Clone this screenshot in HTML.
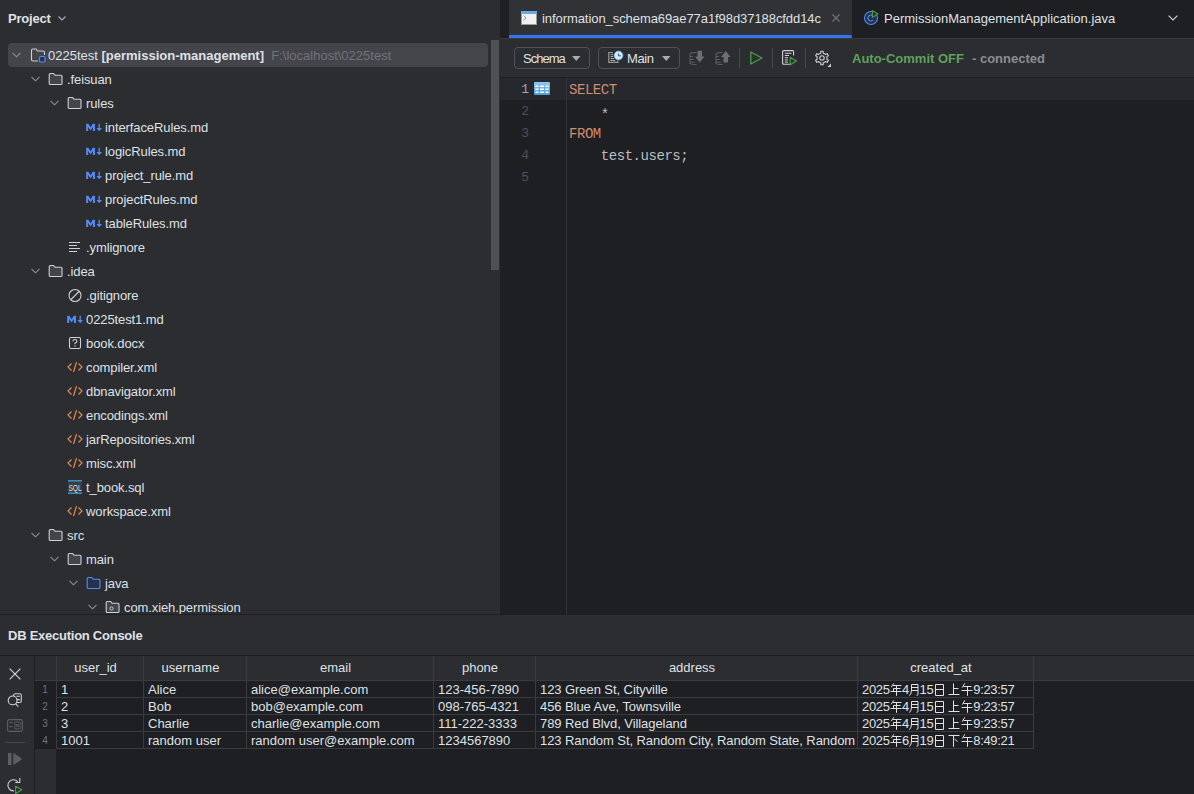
<!DOCTYPE html>
<html><head><meta charset="utf-8">
<style>
*{margin:0;padding:0;box-sizing:border-box}
html,body{width:1194px;height:794px;overflow:hidden;background:#2B2D30;font-family:"Liberation Sans",sans-serif;font-size:13px;color:#DFE1E5}
.a{position:absolute}
.t{position:absolute;white-space:pre;line-height:16px}
svg{position:absolute;overflow:visible}
#proj{left:0;top:0;width:500px;height:614px;background:#2B2D30;overflow:hidden}
#editor{left:500px;top:0;width:694px;height:614px;background:#1E1F22;overflow:hidden}
#console{left:0;top:614px;width:1194px;height:180px;background:#2B2D30}
.code{position:absolute;font-family:"Liberation Mono",monospace;font-size:14px;letter-spacing:-0.45px;line-height:22px;white-space:pre;color:#BCBEC4}
.kw{color:#CF8E6D}
.ln{position:absolute;font-family:"Liberation Mono",monospace;font-size:13px;line-height:22px;color:#4B5059;text-align:right;width:20px}
</style></head><body>

<!-- PROJECT PANEL -->
<div id="proj" class="a">
  <div class="t" style="left:8px;top:11px;font-weight:bold;letter-spacing:-0.2px">Project</div>
  <svg style="left:58px;top:16px" width="8" height="5"><path d="M0.5 0.5 L4 4 L7.5 0.5" stroke="#A8ADB3" stroke-width="1.2" fill="none"/></svg>
<div class="a" style="left:8px;top:43px;width:480px;height:24px;background:#43454A;border-radius:4px"></div>
<svg style="left:12px;top:52px" width="9" height="6"><path d="M0.5 0.8 L4.5 4.8 L8.5 0.8" stroke="#8C9096" stroke-width="1.1" fill="none"/></svg>
<svg style="left:30px;top:48px" width="16" height="15"><path d="M8 13 L3 13 Q1.5 13 1.5 11.5 L1.5 2.5 Q1.5 1 3 1 L6 1 L7.5 3 L13 3 Q14.5 3 14.5 4.5 L14.5 7" fill="none" stroke="#CED0D6" stroke-width="1.1"/><rect x="9.5" y="8.5" width="5.5" height="5.5" rx="1.3" fill="#25324D" stroke="#548AF7" stroke-width="1.2"/></svg>
<div class="t" style="left:48px;top:48px">0225test <b>[permission-management]</b>  <span style="color:#6F737A">F:\localhost\0225test</span></div>
<svg style="left:31px;top:76px" width="9" height="6"><path d="M0.5 0.8 L4.5 4.8 L8.5 0.8" stroke="#8C9096" stroke-width="1.1" fill="none"/></svg>
<svg style="left:48px;top:72px" width="16" height="14"><path d="M1.2 2.6 Q1.2 1.5 2.3 1.5 L5.6 1.5 L7.1 3.2 L12.9 3.2 Q14 3.2 14 4.3 L14 11.4 Q14 12.5 12.9 12.5 L2.3 12.5 Q1.2 12.5 1.2 11.4 Z" fill="#43454A" stroke="#CED0D6" stroke-width="1.1"/></svg>
<div class="t" style="left:67px;top:72px;letter-spacing:-0.1px">.feisuan</div>
<svg style="left:50px;top:100px" width="9" height="6"><path d="M0.5 0.8 L4.5 4.8 L8.5 0.8" stroke="#8C9096" stroke-width="1.1" fill="none"/></svg>
<svg style="left:67px;top:96px" width="16" height="14"><path d="M1.2 2.6 Q1.2 1.5 2.3 1.5 L5.6 1.5 L7.1 3.2 L12.9 3.2 Q14 3.2 14 4.3 L14 11.4 Q14 12.5 12.9 12.5 L2.3 12.5 Q1.2 12.5 1.2 11.4 Z" fill="#43454A" stroke="#CED0D6" stroke-width="1.1"/></svg>
<div class="t" style="left:86px;top:96px;letter-spacing:-0.1px">rules</div>
<svg style="left:86px;top:123px" width="17" height="9"><path d="M0.2 0.8 H2.4 L4.6 4.2 L6.8 0.8 H9 V8 H7 V4 L4.6 7.6 L2.2 4 V8 H0.2 Z" fill="#548AF7"/><path d="M13.2 0.8 V6" stroke="#548AF7" stroke-width="1.3"/><path d="M10.4 5 H16 L13.2 8.3 Z" fill="#548AF7"/></svg>
<div class="t" style="left:105px;top:120px;letter-spacing:-0.1px">interfaceRules.md</div>
<svg style="left:86px;top:147px" width="17" height="9"><path d="M0.2 0.8 H2.4 L4.6 4.2 L6.8 0.8 H9 V8 H7 V4 L4.6 7.6 L2.2 4 V8 H0.2 Z" fill="#548AF7"/><path d="M13.2 0.8 V6" stroke="#548AF7" stroke-width="1.3"/><path d="M10.4 5 H16 L13.2 8.3 Z" fill="#548AF7"/></svg>
<div class="t" style="left:105px;top:144px;letter-spacing:-0.1px">logicRules.md</div>
<svg style="left:86px;top:171px" width="17" height="9"><path d="M0.2 0.8 H2.4 L4.6 4.2 L6.8 0.8 H9 V8 H7 V4 L4.6 7.6 L2.2 4 V8 H0.2 Z" fill="#548AF7"/><path d="M13.2 0.8 V6" stroke="#548AF7" stroke-width="1.3"/><path d="M10.4 5 H16 L13.2 8.3 Z" fill="#548AF7"/></svg>
<div class="t" style="left:105px;top:168px;letter-spacing:-0.1px">project_rule.md</div>
<svg style="left:86px;top:195px" width="17" height="9"><path d="M0.2 0.8 H2.4 L4.6 4.2 L6.8 0.8 H9 V8 H7 V4 L4.6 7.6 L2.2 4 V8 H0.2 Z" fill="#548AF7"/><path d="M13.2 0.8 V6" stroke="#548AF7" stroke-width="1.3"/><path d="M10.4 5 H16 L13.2 8.3 Z" fill="#548AF7"/></svg>
<div class="t" style="left:105px;top:192px;letter-spacing:-0.1px">projectRules.md</div>
<svg style="left:86px;top:219px" width="17" height="9"><path d="M0.2 0.8 H2.4 L4.6 4.2 L6.8 0.8 H9 V8 H7 V4 L4.6 7.6 L2.2 4 V8 H0.2 Z" fill="#548AF7"/><path d="M13.2 0.8 V6" stroke="#548AF7" stroke-width="1.3"/><path d="M10.4 5 H16 L13.2 8.3 Z" fill="#548AF7"/></svg>
<div class="t" style="left:105px;top:216px;letter-spacing:-0.1px">tableRules.md</div>
<svg style="left:68px;top:241px" width="14" height="12"><path d="M1 1.5 H12 M1 4.5 H9 M1 7.5 H12 M1 10.5 H9" stroke="#CED0D6" stroke-width="1.1"/></svg>
<div class="t" style="left:86px;top:240px;letter-spacing:-0.1px">.ymlignore</div>
<svg style="left:31px;top:268px" width="9" height="6"><path d="M0.5 0.8 L4.5 4.8 L8.5 0.8" stroke="#8C9096" stroke-width="1.1" fill="none"/></svg>
<svg style="left:48px;top:264px" width="16" height="14"><path d="M1.2 2.6 Q1.2 1.5 2.3 1.5 L5.6 1.5 L7.1 3.2 L12.9 3.2 Q14 3.2 14 4.3 L14 11.4 Q14 12.5 12.9 12.5 L2.3 12.5 Q1.2 12.5 1.2 11.4 Z" fill="#43454A" stroke="#CED0D6" stroke-width="1.1"/></svg>
<div class="t" style="left:67px;top:264px;letter-spacing:-0.1px">.idea</div>
<svg style="left:68px;top:288px" width="15" height="15"><circle cx="7" cy="7.5" r="6" fill="none" stroke="#CED0D6" stroke-width="1.1"/><path d="M3 11.5 L11 3.5" stroke="#CED0D6" stroke-width="1.1"/></svg>
<div class="t" style="left:86px;top:288px;letter-spacing:-0.1px">.gitignore</div>
<svg style="left:67px;top:315px" width="17" height="9"><path d="M0.2 0.8 H2.4 L4.6 4.2 L6.8 0.8 H9 V8 H7 V4 L4.6 7.6 L2.2 4 V8 H0.2 Z" fill="#548AF7"/><path d="M13.2 0.8 V6" stroke="#548AF7" stroke-width="1.3"/><path d="M10.4 5 H16 L13.2 8.3 Z" fill="#548AF7"/></svg>
<div class="t" style="left:86px;top:312px;letter-spacing:-0.1px">0225test1.md</div>
<svg style="left:68px;top:336px" width="14" height="14"><rect x="1.5" y="1.5" width="11" height="11" rx="1.5" fill="none" stroke="#CED0D6" stroke-width="1.1"/><path d="M5 5.2 Q5 3.5 7 3.5 Q9 3.5 9 5.2 Q9 6.5 7 7 L7 8.2" fill="none" stroke="#CED0D6" stroke-width="1.1"/><circle cx="7" cy="10" r="0.7" fill="#CED0D6"/></svg>
<div class="t" style="left:86px;top:336px;letter-spacing:-0.1px">book.docx</div>
<svg style="left:67px;top:360px" width="16" height="14"><path d="M4.5 3.5 L1 7 L4.5 10.5 M11.5 3.5 L15 7 L11.5 10.5 M9.5 2 L6.5 12" fill="none" stroke="#E08855" stroke-width="1.2"/></svg>
<div class="t" style="left:86px;top:360px;letter-spacing:-0.1px">compiler.xml</div>
<svg style="left:67px;top:384px" width="16" height="14"><path d="M4.5 3.5 L1 7 L4.5 10.5 M11.5 3.5 L15 7 L11.5 10.5 M9.5 2 L6.5 12" fill="none" stroke="#E08855" stroke-width="1.2"/></svg>
<div class="t" style="left:86px;top:384px;letter-spacing:-0.1px">dbnavigator.xml</div>
<svg style="left:67px;top:408px" width="16" height="14"><path d="M4.5 3.5 L1 7 L4.5 10.5 M11.5 3.5 L15 7 L11.5 10.5 M9.5 2 L6.5 12" fill="none" stroke="#E08855" stroke-width="1.2"/></svg>
<div class="t" style="left:86px;top:408px;letter-spacing:-0.1px">encodings.xml</div>
<svg style="left:67px;top:432px" width="16" height="14"><path d="M4.5 3.5 L1 7 L4.5 10.5 M11.5 3.5 L15 7 L11.5 10.5 M9.5 2 L6.5 12" fill="none" stroke="#E08855" stroke-width="1.2"/></svg>
<div class="t" style="left:86px;top:432px;letter-spacing:-0.1px">jarRepositories.xml</div>
<svg style="left:67px;top:456px" width="16" height="14"><path d="M4.5 3.5 L1 7 L4.5 10.5 M11.5 3.5 L15 7 L11.5 10.5 M9.5 2 L6.5 12" fill="none" stroke="#E08855" stroke-width="1.2"/></svg>
<div class="t" style="left:86px;top:456px;letter-spacing:-0.1px">misc.xml</div>
<svg style="left:68px;top:480px" width="15" height="14"><rect x="0" y="1" width="14" height="12" fill="#3A3D42"/><path d="M0 0.8 H14 M0 13.2 H14" stroke="#3592C4" stroke-width="1.6"/><text x="0.4" y="10.6" font-family="Liberation Sans" font-size="9.5" fill="#DFE1E5" textLength="13.2" lengthAdjust="spacingAndGlyphs">SQL</text></svg>
<div class="t" style="left:86px;top:480px;letter-spacing:-0.1px">t_book.sql</div>
<svg style="left:67px;top:504px" width="16" height="14"><path d="M4.5 3.5 L1 7 L4.5 10.5 M11.5 3.5 L15 7 L11.5 10.5 M9.5 2 L6.5 12" fill="none" stroke="#E08855" stroke-width="1.2"/></svg>
<div class="t" style="left:86px;top:504px;letter-spacing:-0.1px">workspace.xml</div>
<svg style="left:31px;top:532px" width="9" height="6"><path d="M0.5 0.8 L4.5 4.8 L8.5 0.8" stroke="#8C9096" stroke-width="1.1" fill="none"/></svg>
<svg style="left:48px;top:528px" width="16" height="14"><path d="M1.2 2.6 Q1.2 1.5 2.3 1.5 L5.6 1.5 L7.1 3.2 L12.9 3.2 Q14 3.2 14 4.3 L14 11.4 Q14 12.5 12.9 12.5 L2.3 12.5 Q1.2 12.5 1.2 11.4 Z" fill="#43454A" stroke="#CED0D6" stroke-width="1.1"/></svg>
<div class="t" style="left:67px;top:528px;letter-spacing:-0.1px">src</div>
<svg style="left:50px;top:556px" width="9" height="6"><path d="M0.5 0.8 L4.5 4.8 L8.5 0.8" stroke="#8C9096" stroke-width="1.1" fill="none"/></svg>
<svg style="left:67px;top:552px" width="16" height="14"><path d="M1.2 2.6 Q1.2 1.5 2.3 1.5 L5.6 1.5 L7.1 3.2 L12.9 3.2 Q14 3.2 14 4.3 L14 11.4 Q14 12.5 12.9 12.5 L2.3 12.5 Q1.2 12.5 1.2 11.4 Z" fill="#43454A" stroke="#CED0D6" stroke-width="1.1"/></svg>
<div class="t" style="left:86px;top:552px;letter-spacing:-0.1px">main</div>
<svg style="left:69px;top:580px" width="9" height="6"><path d="M0.5 0.8 L4.5 4.8 L8.5 0.8" stroke="#8C9096" stroke-width="1.1" fill="none"/></svg>
<svg style="left:86px;top:576px" width="16" height="14"><path d="M1.2 2.6 Q1.2 1.5 2.3 1.5 L5.6 1.5 L7.1 3.2 L12.9 3.2 Q14 3.2 14 4.3 L14 11.4 Q14 12.5 12.9 12.5 L2.3 12.5 Q1.2 12.5 1.2 11.4 Z" fill="#25324D" stroke="#548AF7" stroke-width="1.1"/></svg>
<div class="t" style="left:105px;top:576px;letter-spacing:-0.1px">java</div>
<svg style="left:88px;top:604px" width="9" height="6"><path d="M0.5 0.8 L4.5 4.8 L8.5 0.8" stroke="#8C9096" stroke-width="1.1" fill="none"/></svg>
<svg style="left:105px;top:600px" width="16" height="14"><path d="M1.2 2.6 Q1.2 1.5 2.3 1.5 L5.6 1.5 L7.1 3.2 L12.9 3.2 Q14 3.2 14 4.3 L14 11.4 Q14 12.5 12.9 12.5 L2.3 12.5 Q1.2 12.5 1.2 11.4 Z" fill="#43454A" stroke="#CED0D6" stroke-width="1.1"/><circle cx="6.5" cy="8.5" r="1.6" fill="none" stroke="#CED0D6" stroke-width="1"/></svg>
<div class="t" style="left:124px;top:600px;letter-spacing:-0.1px">com.xieh.permission</div>
  <div class="a" style="left:491px;top:40px;width:8px;height:230px;background:#4E5054"></div>
</div>

<!-- EDITOR -->
<div id="editor" class="a">
  <div class="a" style="left:0;top:0;width:694px;height:38px;background:#1E1F22"></div>
  <div class="a" style="left:9px;top:0;width:343px;height:38px;background:#303236"></div>
  <div class="a" style="left:9px;top:35px;width:343px;height:3px;background:#3574F0;border-radius:0 2px 2px 0"></div>
  <!-- tab icon -->
  <div class="a" style="left:21px;top:11px;width:16px;height:14px;background:#F0F0F0;border:1px solid #9A9A9A;border-top:none"></div>
  <div class="a" style="left:21px;top:11px;width:16px;height:3px;background:#6CA9E0"></div>
  <svg style="left:23px;top:15px" width="5" height="6"><path d="M0.5 0.5 L3 3 L0.5 5.5" stroke="#8A8A8A" stroke-width="0.9" fill="none"/></svg>
  <div class="t" style="left:42px;top:11px;letter-spacing:-0.07px">information_schema69ae77a1f98d37188cfdd14c</div>
  <svg style="left:332px;top:14px" width="8" height="8"><path d="M0.5 0.5 L7.5 7.5 M7.5 0.5 L0.5 7.5" stroke="#6F737A" stroke-width="1.1"/></svg>
  <!-- java icon -->
  <svg style="left:364px;top:11px" width="15" height="15">
    <circle cx="7" cy="7" r="6.5" fill="#25324D" stroke="#548AF7" stroke-width="1.1"/>
    <path d="M9.2 5 A3 3 0 1 0 9.2 9" fill="none" stroke="#548AF7" stroke-width="1.1"/>
    <path d="M8.4 -0.4 L14 3 L8.4 6.4 Z" fill="#253627" stroke="#4E9A50" stroke-width="1.1" stroke-linejoin="round"/>
  </svg>
  <div class="t" style="left:384px;top:11px">PermissionManagementApplication.java</div>
  <svg style="left:668px;top:15px" width="11" height="6"><path d="M0.6 0.6 L5 5 L9.4 0.6" stroke="#CED0D6" stroke-width="1.2" fill="none"/></svg>
  <!-- toolbar -->
  <div class="a" style="left:0;top:38px;width:694px;height:39px;background:#2B2D30;border-top:1px solid #393B40"></div>
  <div class="a" style="left:0;top:77px;width:694px;height:1px;background:#1E1F22"></div>
  <div class="a" style="left:14px;top:47px;width:76px;height:22px;border:1px solid #4E5157;border-radius:4px"></div>
  <div class="t" style="left:23px;top:51px;letter-spacing:-1px">Schema</div>
  <svg style="left:72px;top:56px" width="9" height="5"><path d="M0 0 H8.5 L4.25 5 Z" fill="#A8ABB0"/></svg>
  <div class="a" style="left:98px;top:47px;width:82px;height:22px;border:1px solid #4E5157;border-radius:4px"></div>
  <!-- main icon -->
  <svg style="left:108px;top:51px" width="20" height="13">
    <path d="M5 1.5 H0.8 V11.4 H9.8 V9.8" fill="none" stroke="#9A9A9A" stroke-width="1.2"/>
    <path d="M2.6 3.6 H5.2 M2.6 5.5 H5.2 M2.6 7.5 H6.2 M2.6 9.5 H7.2" stroke="#B8B8B8" stroke-width="0.9"/>
    <circle cx="10.5" cy="4.5" r="4.4" fill="#D2ECFB" stroke="#5CAEE8" stroke-width="0.9"/>
    <path d="M10.4 2.6 V4.8 H12.8" stroke="#3A3050" stroke-width="0.9" fill="none"/>
  </svg>
  <div class="t" style="left:127px;top:51px;letter-spacing:-0.4px">Main</div>
  <svg style="left:162px;top:56px" width="9" height="5"><path d="M0 0 H8.5 L4.25 5 Z" fill="#A8ABB0"/></svg>
  <!-- commit / rollback -->
  <svg style="left:189px;top:50px" width="16" height="16">
    <path d="M7.5 2.5 Q1 2.5 1 4 V13 Q1 14.5 7.5 14.5 M1 6.5 H4 M1 9.5 H5 M1 12.3 H6" fill="none" stroke="#5A5D62" stroke-width="1.1"/>
    <path d="M8.5 0.8 H13 V6.5 H15.5 L10.75 12.5 L6 6.5 H8.5 Z" fill="#6B6E73"/>
  </svg>
  <svg style="left:215px;top:50px" width="16" height="16">
    <path d="M7.5 2.5 Q1 2.5 1 4 V13 Q1 14.5 7.5 14.5 M1 6.5 H4 M1 9.5 H5 M1 12.3 H6" fill="none" stroke="#5A5D62" stroke-width="1.1"/>
    <path d="M8.5 12.5 H13 V7 H15.5 L10.75 1 L6 7 H8.5 Z" fill="#6B6E73"/>
  </svg>
  <div class="a" style="left:239px;top:48px;width:1px;height:20px;background:#45474C"></div>
  <svg style="left:250px;top:51px" width="13" height="14"><path d="M0.8 1 L12 7 L0.8 13 Z" fill="#253627" stroke="#4E9A50" stroke-width="1.3" stroke-linejoin="round"/></svg>
  <div class="a" style="left:272px;top:48px;width:1px;height:20px;background:#45474C"></div>
  <svg style="left:282px;top:50px" width="16" height="16">
    <path d="M8 14.3 H2 Q0.6 14.3 0.6 13 V1.8 Q0.6 0.6 2 0.6 H10.5 Q11.6 0.6 11.6 1.8 V5.5" fill="none" stroke="#CED0D6" stroke-width="1.1"/>
    <path d="M2.8 3.3 H9.5 M2.8 5.5 H7 M2.8 7.7 H6 M2.8 9.9 H6 M2.8 12.1 H6" stroke="#CED0D6" stroke-width="1"/>
    <path d="M8.3 7.3 L14.5 11 L8.3 14.7 Z" fill="#253627" stroke="#4E9A50" stroke-width="1.1" stroke-linejoin="round"/>
  </svg>
  <div class="a" style="left:305px;top:48px;width:1px;height:20px;background:#45474C"></div>
  <svg style="left:315px;top:51px" width="17" height="17">
    <path d="M4.50 2.67 L5.79 2.15 L5.82 0.30 L8.18 0.30 L8.21 2.15 L9.50 2.67 L10.60 3.53 L12.21 2.63 L13.39 4.67 L11.81 5.62 L12.00 7.00 L11.81 8.38 L13.39 9.33 L12.21 11.37 L10.60 10.47 L9.50 11.33 L8.21 11.85 L8.18 13.70 L5.82 13.70 L5.79 11.85 L4.50 11.33 L3.40 10.47 L1.79 11.37 L0.61 9.33 L2.19 8.38 L2.00 7.00 L2.19 5.62 L0.61 4.67 L1.79 2.63 L3.40 3.53 Z" fill="none" stroke="#CED0D6" stroke-width="1.1" stroke-linejoin="round"/>
    <circle cx="7" cy="7" r="2.2" fill="none" stroke="#CED0D6" stroke-width="1.1"/>
    <path d="M12.5 16 L16 16 L16 12.5 Z" fill="#CED0D6"/>
  </svg>
  <div class="t" style="left:352px;top:51px;font-weight:bold;color:#5FA05C">Auto-Commit OFF</div>
  <div class="t" style="left:472px;top:51px;font-weight:bold;color:#8A8D92">- connected</div>
  <!-- code area -->
  <div class="a" style="left:0;top:78px;width:694px;height:22px;background:#26282E"></div>
  <div class="a" style="left:66px;top:78px;width:1px;height:536px;background:#313438"></div>
  <div class="ln" style="left:9px;top:79px;color:#A1A3AB">1</div>
  <div class="ln" style="left:9px;top:101px">2</div>
  <div class="ln" style="left:9px;top:123px">3</div>
  <div class="ln" style="left:9px;top:145px">4</div>
  <div class="ln" style="left:9px;top:167px">5</div>
  <!-- gutter table icon -->
  <svg style="left:34px;top:82px" width="16" height="13">
    <defs><linearGradient id="tg" x1="0" y1="0" x2="0" y2="1"><stop offset="0" stop-color="#8DC8EE"/><stop offset="1" stop-color="#4D9ED6"/></linearGradient></defs>
    <rect x="0" y="0" width="16" height="13" rx="1" fill="url(#tg)"/>
    <path d="M1.5 4.2 H4.5 M6 4.2 H10 M11.5 4.2 H14.5 M1.5 7.2 H4.5 M6 7.2 H10 M11.5 7.2 H14.5 M1.5 10.2 H4.5 M6 10.2 H10 M11.5 10.2 H14.5" stroke="#FFFFFF" stroke-width="1.6"/>
  </svg>
  <div class="code" style="left:69px;top:79px"><span class="kw">SELECT</span>
    <span style="position:relative;top:3px">*</span>
<span class="kw">FROM</span>
    test.users;
</div>
</div>

<!-- CONSOLE -->
<div id="console" class="a">
  <div class="a" style="left:0;top:0;width:1194px;height:1px;background:#1E1F22"></div>
  <div class="t" style="left:8px;top:14px;font-weight:bold;letter-spacing:-0.25px">DB Execution Console</div>
  <div class="a" style="left:0;top:41px;width:1194px;height:1px;background:#1E1F22"></div>
  <div class="a" style="left:35px;top:42px;width:1159px;height:138px;background:#1E1F22"></div>
  <!-- left toolbar icons -->
  <svg style="left:9px;top:54px" width="12" height="12"><path d="M0.6 0.6 L11.4 11.4 M11.4 0.6 L0.6 11.4" stroke="#CED0D6" stroke-width="1.2"/></svg>
</div>
<svg style="left:7px;top:692px" width="16" height="16">
  <rect x="6.7" y="1.7" width="7.6" height="8.8" rx="1.6" fill="none" stroke="#CED0D6" stroke-width="1.1"/>
  <path d="M9.5 4.3 H12.8 M10 7.6 H12.8" stroke="#CED0D6" stroke-width="1.1"/>
  <circle cx="5.6" cy="8.4" r="4.4" fill="#2B2D30" stroke="#CED0D6" stroke-width="1.1"/>
  <path d="M8.6 11.6 L11.3 14.6" stroke="#CED0D6" stroke-width="1.1"/>
</svg>
<svg style="left:7px;top:719px" width="16" height="13">
  <rect x="0.6" y="0.6" width="14.8" height="11.8" rx="1.5" fill="none" stroke="#5A5D62" stroke-width="1.1"/>
  <path d="M2.2 3.6 H5.8 M2.2 7.6 H5.8" stroke="#5A5D62" stroke-width="1"/>
  <rect x="7.4" y="3" width="6.4" height="2.8" rx="1.3" fill="none" stroke="#5A5D62" stroke-width="1"/>
  <rect x="7.4" y="7.1" width="6.4" height="2.8" rx="1.3" fill="none" stroke="#5A5D62" stroke-width="1"/>
</svg>
<div class="a" style="left:5px;top:742px;width:20px;height:1px;background:#45474C"></div>
<svg style="left:8px;top:753px" width="14" height="12">
  <rect x="0" y="0" width="3.5" height="12" fill="#5A5D62"/>
  <path d="M5.8 0.6 L13.6 6 L5.8 11.4 Z" fill="#5A5D62" stroke="#5A5D62" stroke-width="1" stroke-linejoin="round"/>
</svg>
<svg style="left:7px;top:777px" width="17" height="18">
  <path d="M10.79 4.70 A5.6 5.6 0 1 0 6.99 13.88" fill="none" stroke="#CED0D6" stroke-width="1.1"/>
  <path d="M8.2 5.5 H12.8 V1" fill="none" stroke="#CED0D6" stroke-width="1.1"/>
  <path d="M8.6 9.2 L14.8 12.8 L8.6 16.4 Z" fill="#243526" stroke="#4E9A50" stroke-width="1.1" stroke-linejoin="round"/>
</svg>
<div class="a" style="left:35px;top:656px;width:1159px;height:24px;background:#2B2D30"></div>
<div class="a" style="left:34px;top:656px;width:1px;height:138px;background:#1E1F22"></div>
<div class="a" style="left:35px;top:680px;width:1159px;height:1px;background:#393B40"></div>
<div class="a" style="left:56px;top:656px;width:1px;height:92px;background:#393B40"></div>
<div class="t" style="left:56px;top:660px;width:79px;text-align:center">user_id</div>
<div class="a" style="left:143px;top:656px;width:1px;height:92px;background:#393B40"></div>
<div class="t" style="left:143px;top:660px;width:95px;text-align:center">username</div>
<div class="a" style="left:246px;top:656px;width:1px;height:92px;background:#393B40"></div>
<div class="t" style="left:246px;top:660px;width:179px;text-align:center">email</div>
<div class="a" style="left:433px;top:656px;width:1px;height:92px;background:#393B40"></div>
<div class="t" style="left:433px;top:660px;width:94px;text-align:center">phone</div>
<div class="a" style="left:535px;top:656px;width:1px;height:92px;background:#393B40"></div>
<div class="t" style="left:535px;top:660px;width:314px;text-align:center">address</div>
<div class="a" style="left:857px;top:656px;width:1px;height:92px;background:#393B40"></div>
<div class="t" style="left:857px;top:660px;width:168px;text-align:center">created_at</div>
<div class="a" style="left:1033px;top:656px;width:1px;height:92px;background:#393B40"></div>
<div class="a" style="left:35px;top:749px;width:21px;height:45px;background:#2B2D30"></div>
<div class="a" style="left:56px;top:697px;width:978px;height:1px;background:#393B40"></div>
<div class="a" style="left:56px;top:714px;width:978px;height:1px;background:#393B40"></div>
<div class="a" style="left:56px;top:731px;width:978px;height:1px;background:#393B40"></div>
<div class="a" style="left:56px;top:748px;width:978px;height:1px;background:#393B40"></div>
<div class="t" style="left:36px;top:682px;width:18px;text-align:center;font-size:10px;color:#6F737A">1</div>
<div class="t" style="left:61px;top:682px;width:82px;overflow:hidden">1</div>
<div class="t" style="left:148px;top:682px;width:98px;overflow:hidden">Alice</div>
<div class="t" style="left:251px;top:682px;width:182px;overflow:hidden">alice@example.com</div>
<div class="t" style="left:438px;top:682px;width:97px;overflow:hidden">123-456-7890</div>
<div class="t" style="left:540px;top:682px;width:317px;overflow:hidden;letter-spacing:-0.07px">123 Green St, Cityville</div>
<div class="t" style="left:862px;top:682px;width:171px;overflow:hidden;letter-spacing:-0.35px">2025<svg style="position:relative;display:inline-block;vertical-align:-2px;margin:0 0.4px 0 0.2px" width="12" height="13"><path d="M3.8 0.3 L1.2 4.2 M3 2.5 H11.5 M3.5 5.5 H10.5 M0.5 8.5 H11.5 M6.5 2.5 V12.8 M3.5 5.5 V8.5" fill="none" stroke="#DFE1E5" stroke-width="1"/></svg>4<svg style="position:relative;display:inline-block;vertical-align:-2px;margin:0 0.4px 0 0.2px" width="10" height="13"><path d="M2.5 1.5 H9 V11.2 Q9 12.5 7.5 12.3 M2.5 1.5 V7 Q2.5 10.5 0.5 12.6 M2.5 4.5 H9 M2.5 7.5 H9" fill="none" stroke="#DFE1E5" stroke-width="1"/></svg>15<svg style="position:relative;display:inline-block;vertical-align:-2px;margin:0 0.4px 0 0.2px" width="11" height="13"><path d="M1.5 1.5 H9.5 V12.5 H1.5 Z M1.5 6.5 H9.5" fill="none" stroke="#DFE1E5" stroke-width="1"/></svg> <svg style="position:relative;display:inline-block;vertical-align:-2px;margin:0 0.4px 0 0.2px" width="12" height="13"><path d="M5.5 0.5 V11.5 M5.5 5.5 H10.5 M0.5 11.5 H11.5" fill="none" stroke="#DFE1E5" stroke-width="1"/></svg><svg style="position:relative;display:inline-block;vertical-align:-2px;margin:0 0.4px 0 0.2px" width="12" height="13"><path d="M3.8 0.3 L1.3 4.6 M2.5 3.5 H10.5 M0.5 7.5 H11.5 M6.5 3.5 V12.8" fill="none" stroke="#DFE1E5" stroke-width="1"/></svg>9:23:57</div>
<div class="t" style="left:36px;top:699px;width:18px;text-align:center;font-size:10px;color:#6F737A">2</div>
<div class="t" style="left:61px;top:699px;width:82px;overflow:hidden">2</div>
<div class="t" style="left:148px;top:699px;width:98px;overflow:hidden">Bob</div>
<div class="t" style="left:251px;top:699px;width:182px;overflow:hidden">bob@example.com</div>
<div class="t" style="left:438px;top:699px;width:97px;overflow:hidden">098-765-4321</div>
<div class="t" style="left:540px;top:699px;width:317px;overflow:hidden;letter-spacing:-0.07px">456 Blue Ave, Townsville</div>
<div class="t" style="left:862px;top:699px;width:171px;overflow:hidden;letter-spacing:-0.35px">2025<svg style="position:relative;display:inline-block;vertical-align:-2px;margin:0 0.4px 0 0.2px" width="12" height="13"><path d="M3.8 0.3 L1.2 4.2 M3 2.5 H11.5 M3.5 5.5 H10.5 M0.5 8.5 H11.5 M6.5 2.5 V12.8 M3.5 5.5 V8.5" fill="none" stroke="#DFE1E5" stroke-width="1"/></svg>4<svg style="position:relative;display:inline-block;vertical-align:-2px;margin:0 0.4px 0 0.2px" width="10" height="13"><path d="M2.5 1.5 H9 V11.2 Q9 12.5 7.5 12.3 M2.5 1.5 V7 Q2.5 10.5 0.5 12.6 M2.5 4.5 H9 M2.5 7.5 H9" fill="none" stroke="#DFE1E5" stroke-width="1"/></svg>15<svg style="position:relative;display:inline-block;vertical-align:-2px;margin:0 0.4px 0 0.2px" width="11" height="13"><path d="M1.5 1.5 H9.5 V12.5 H1.5 Z M1.5 6.5 H9.5" fill="none" stroke="#DFE1E5" stroke-width="1"/></svg> <svg style="position:relative;display:inline-block;vertical-align:-2px;margin:0 0.4px 0 0.2px" width="12" height="13"><path d="M5.5 0.5 V11.5 M5.5 5.5 H10.5 M0.5 11.5 H11.5" fill="none" stroke="#DFE1E5" stroke-width="1"/></svg><svg style="position:relative;display:inline-block;vertical-align:-2px;margin:0 0.4px 0 0.2px" width="12" height="13"><path d="M3.8 0.3 L1.3 4.6 M2.5 3.5 H10.5 M0.5 7.5 H11.5 M6.5 3.5 V12.8" fill="none" stroke="#DFE1E5" stroke-width="1"/></svg>9:23:57</div>
<div class="t" style="left:36px;top:716px;width:18px;text-align:center;font-size:10px;color:#6F737A">3</div>
<div class="t" style="left:61px;top:716px;width:82px;overflow:hidden">3</div>
<div class="t" style="left:148px;top:716px;width:98px;overflow:hidden">Charlie</div>
<div class="t" style="left:251px;top:716px;width:182px;overflow:hidden">charlie@example.com</div>
<div class="t" style="left:438px;top:716px;width:97px;overflow:hidden">111-222-3333</div>
<div class="t" style="left:540px;top:716px;width:317px;overflow:hidden;letter-spacing:-0.07px">789 Red Blvd, Villageland</div>
<div class="t" style="left:862px;top:716px;width:171px;overflow:hidden;letter-spacing:-0.35px">2025<svg style="position:relative;display:inline-block;vertical-align:-2px;margin:0 0.4px 0 0.2px" width="12" height="13"><path d="M3.8 0.3 L1.2 4.2 M3 2.5 H11.5 M3.5 5.5 H10.5 M0.5 8.5 H11.5 M6.5 2.5 V12.8 M3.5 5.5 V8.5" fill="none" stroke="#DFE1E5" stroke-width="1"/></svg>4<svg style="position:relative;display:inline-block;vertical-align:-2px;margin:0 0.4px 0 0.2px" width="10" height="13"><path d="M2.5 1.5 H9 V11.2 Q9 12.5 7.5 12.3 M2.5 1.5 V7 Q2.5 10.5 0.5 12.6 M2.5 4.5 H9 M2.5 7.5 H9" fill="none" stroke="#DFE1E5" stroke-width="1"/></svg>15<svg style="position:relative;display:inline-block;vertical-align:-2px;margin:0 0.4px 0 0.2px" width="11" height="13"><path d="M1.5 1.5 H9.5 V12.5 H1.5 Z M1.5 6.5 H9.5" fill="none" stroke="#DFE1E5" stroke-width="1"/></svg> <svg style="position:relative;display:inline-block;vertical-align:-2px;margin:0 0.4px 0 0.2px" width="12" height="13"><path d="M5.5 0.5 V11.5 M5.5 5.5 H10.5 M0.5 11.5 H11.5" fill="none" stroke="#DFE1E5" stroke-width="1"/></svg><svg style="position:relative;display:inline-block;vertical-align:-2px;margin:0 0.4px 0 0.2px" width="12" height="13"><path d="M3.8 0.3 L1.3 4.6 M2.5 3.5 H10.5 M0.5 7.5 H11.5 M6.5 3.5 V12.8" fill="none" stroke="#DFE1E5" stroke-width="1"/></svg>9:23:57</div>
<div class="t" style="left:36px;top:733px;width:18px;text-align:center;font-size:10px;color:#6F737A">4</div>
<div class="t" style="left:61px;top:733px;width:82px;overflow:hidden">1001</div>
<div class="t" style="left:148px;top:733px;width:98px;overflow:hidden">random user</div>
<div class="t" style="left:251px;top:733px;width:182px;overflow:hidden">random user@example.com</div>
<div class="t" style="left:438px;top:733px;width:97px;overflow:hidden">1234567890</div>
<div class="t" style="left:540px;top:733px;width:317px;overflow:hidden;letter-spacing:-0.07px">123 Random St, Random City, Random State, Random</div>
<div class="t" style="left:862px;top:733px;width:171px;overflow:hidden;letter-spacing:-0.35px">2025<svg style="position:relative;display:inline-block;vertical-align:-2px;margin:0 0.4px 0 0.2px" width="12" height="13"><path d="M3.8 0.3 L1.2 4.2 M3 2.5 H11.5 M3.5 5.5 H10.5 M0.5 8.5 H11.5 M6.5 2.5 V12.8 M3.5 5.5 V8.5" fill="none" stroke="#DFE1E5" stroke-width="1"/></svg>6<svg style="position:relative;display:inline-block;vertical-align:-2px;margin:0 0.4px 0 0.2px" width="10" height="13"><path d="M2.5 1.5 H9 V11.2 Q9 12.5 7.5 12.3 M2.5 1.5 V7 Q2.5 10.5 0.5 12.6 M2.5 4.5 H9 M2.5 7.5 H9" fill="none" stroke="#DFE1E5" stroke-width="1"/></svg>19<svg style="position:relative;display:inline-block;vertical-align:-2px;margin:0 0.4px 0 0.2px" width="11" height="13"><path d="M1.5 1.5 H9.5 V12.5 H1.5 Z M1.5 6.5 H9.5" fill="none" stroke="#DFE1E5" stroke-width="1"/></svg> <svg style="position:relative;display:inline-block;vertical-align:-2px;margin:0 0.4px 0 0.2px" width="12" height="13"><path d="M0.5 1.5 H11.5 M5.5 1.5 V12.8 M6.5 5 L9.5 7.5" fill="none" stroke="#DFE1E5" stroke-width="1"/></svg><svg style="position:relative;display:inline-block;vertical-align:-2px;margin:0 0.4px 0 0.2px" width="12" height="13"><path d="M3.8 0.3 L1.3 4.6 M2.5 3.5 H10.5 M0.5 7.5 H11.5 M6.5 3.5 V12.8" fill="none" stroke="#DFE1E5" stroke-width="1"/></svg>8:49:21</div>
</body></html>
